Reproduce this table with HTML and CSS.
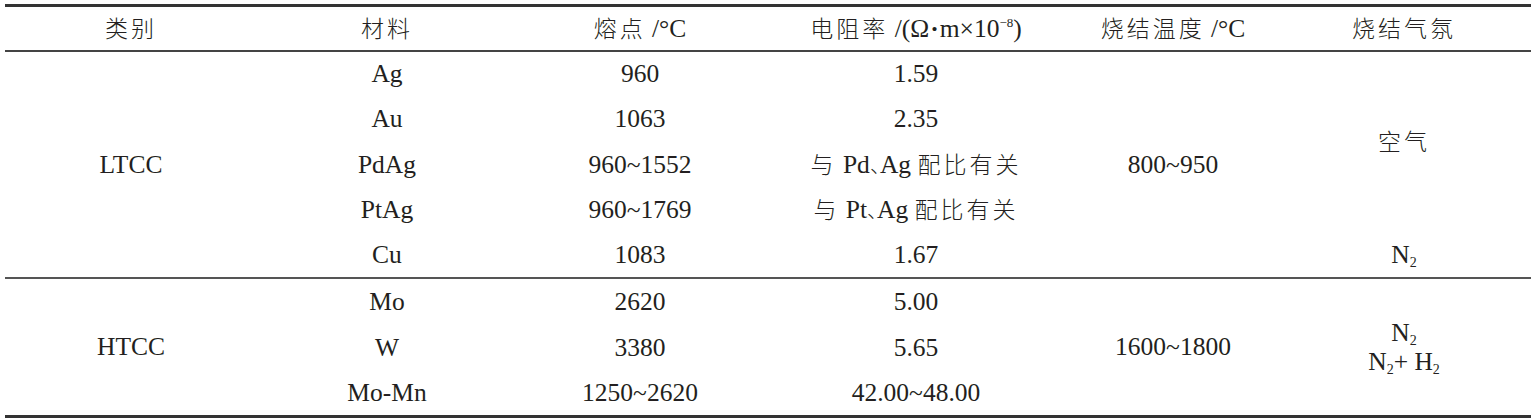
FILE: index.html
```html
<!DOCTYPE html>
<html lang="en">
  <head>
    <meta charset="UTF-8" />
    <title>导体材料</title>
    <link rel="stylesheet" href="styles.css">
  </head>
  <body>
    <table class="data-table">
      <colgroup>
        <col class="col-type">
        <col class="col-mat">
        <col class="col-melt">
        <col class="col-res">
        <col class="col-temp">
        <col class="col-atm">
      </colgroup>
      <thead>
        <tr>
          <th><span class="cjk">类别</span></th>
          <th><span class="cjk">材料</span></th>
          <th><span class="cjk">熔点</span> /°C</th>
          <th><span class="cjk">电阻率</span> /(Ω<span class="dot">·</span>m×10<sup>−8</sup>)</th>
          <th><span class="cjk">烧结温度</span> /°C</th>
          <th><span class="cjk">烧结气氛</span></th>
        </tr>
      </thead>
      <tbody class="group">
        <tr>
          <td rowspan="5">LTCC</td>
          <td>Ag</td>
          <td>960</td>
          <td>1.59</td>
          <td rowspan="5">800~950</td>
          <td rowspan="4"><span class="cjk">空气</span></td>
        </tr>
        <tr>
          <td>Au</td>
          <td>1063</td>
          <td>2.35</td>
        </tr>
        <tr>
          <td>PdAg</td>
          <td>960~1552</td>
          <td><span class="cjk">与</span> Pd<span class="cjk-tight">、</span>Ag <span class="cjk">配比有关</span></td>
        </tr>
        <tr>
          <td>PtAg</td>
          <td>960~1769</td>
          <td><span class="cjk">与</span> Pt<span class="cjk-tight">、</span>Ag <span class="cjk">配比有关</span></td>
        </tr>
        <tr>
          <td>Cu</td>
          <td>1083</td>
          <td>1.67</td>
          <td>N<sub>2</sub></td>
        </tr>
      </tbody>
      <tbody class="group last">
        <tr>
          <td rowspan="3">HTCC</td>
          <td>Mo</td>
          <td>2620</td>
          <td>5.00</td>
          <td rowspan="3">1600~1800</td>
          <td rowspan="3" class="stack">
            <div>N<sub>2</sub></div>
            <div>N<sub>2</sub>+ H<sub>2</sub></div>
          </td>
        </tr>
        <tr>
          <td>W</td>
          <td>3380</td>
          <td>5.65</td>
        </tr>
        <tr>
          <td>Mo-Mn</td>
          <td>1250~2620</td>
          <td>42.00~48.00</td>
        </tr>
      </tbody>
    </table>
  </body>
</html>
```

FILE: styles.css
```css
* {
  margin: 0;
  padding: 0;
  box-sizing: border-box;
}

body {
  background: #ffffff;
  color: #231f20;
  font-family: "Liberation Serif", serif;
  font-size: 25.5px;
}

.data-table {
  width: 1526px;
  margin: 4px 0 0 5px;
  border-collapse: collapse;
  table-layout: fixed;
  border-top: 3px solid #333;
  border-bottom: 3px solid #333;
}

.col-type { width: 252px; }
.col-mat  { width: 260px; }
.col-melt { width: 246px; }
.col-res  { width: 306px; }
.col-temp { width: 208px; }
.col-atm  { width: 254px; }

.data-table th,
.data-table td {
  font-family: "Liberation Serif", serif;
  text-align: center;
  vertical-align: middle;
  font-weight: 400;
  white-space: nowrap;
  line-height: 1;
}

.data-table th {
  height: 45px;
}

.data-table td {
  height: 45.6px;
}

.data-table thead tr {
  border-bottom: 2px solid #444;
}

.group + .group {
  border-top: 2px solid #555;
}

.group.last td {
  height: 46px;
}

.cjk {
  font-family: "Noto Sans CJK SC", sans-serif;
  font-weight: 300;
  font-size: 23px;
  letter-spacing: 3px;
}

.cjk-tight {
  font-family: "Noto Sans CJK SC", sans-serif;
  font-weight: 300;
  font-size: 20px;
  letter-spacing: -10px;
}

.dot {
  font-weight: 700;
  padding: 0 1px;
}

sup {
  font-size: 13px;
  vertical-align: 10px;
  line-height: 0;
}

sub {
  font-size: 14px;
  vertical-align: -4px;
  line-height: 0;
}

.stack div {
  line-height: 29px;
}
```
